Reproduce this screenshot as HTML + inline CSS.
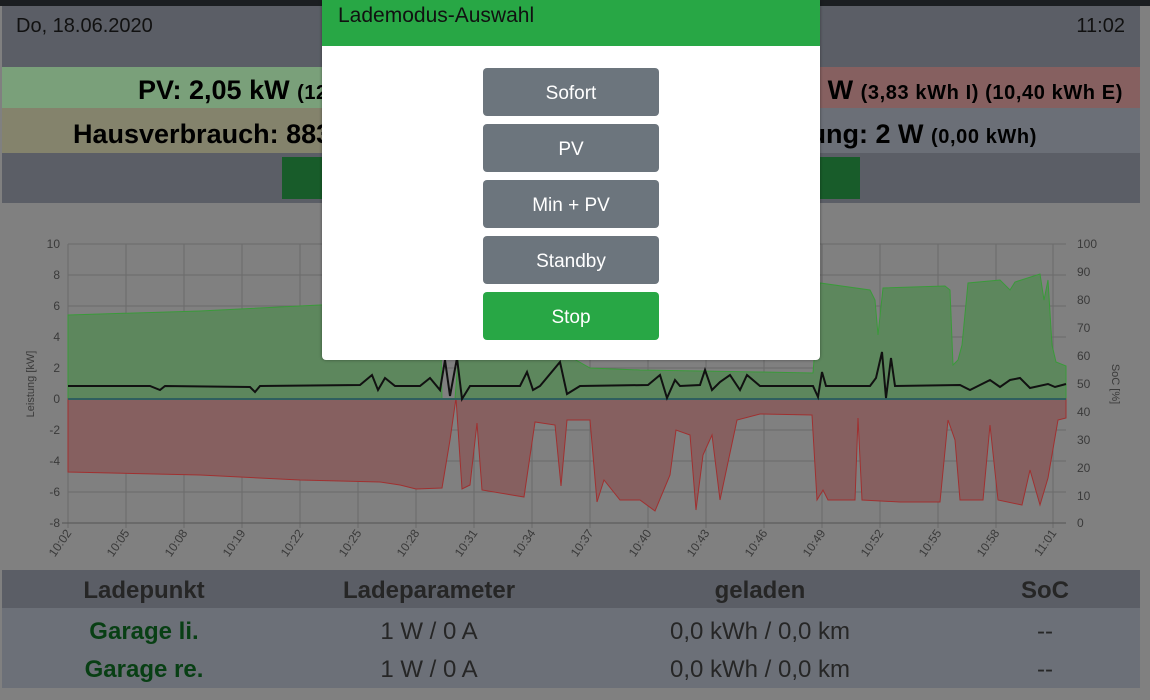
<!DOCTYPE html>
<html><head><meta charset="utf-8"><style>
*{margin:0;padding:0;box-sizing:border-box}
body{width:1150px;height:700px;overflow:hidden;background:#808080;font-family:"Liberation Sans",sans-serif;position:relative}
.a{position:absolute}
.c{position:absolute;transform:translateX(-50%);white-space:nowrap}
.btn{position:absolute;left:161px;width:176px;height:48px;border-radius:4px;background:#6c757d;color:#fff;font-size:19px;text-align:center;line-height:52px}
.s{font-size:20px;letter-spacing:.6px}
</style></head><body>
<div class="a" style="left:0;top:0;width:1150px;height:6px;background:#1b1e21"></div>
<div class="a" style="left:2px;top:6px;width:1138px;height:197px;background:#5b5e66"></div>
<div class="a" style="left:16px;top:15px;font-size:20px;color:#111">Do, 18.06.2020</div>
<div class="a" style="right:25px;top:15px;font-size:20px;color:#111">11:02</div>
<div class="a" style="left:2px;top:67px;width:569px;height:41px;background:#7aa07a"></div>
<div class="a" style="left:571px;top:67px;width:569px;height:41px;background:#866060"></div>
<div class="a" style="left:2px;top:108px;width:569px;height:45px;background:#84836c"></div>
<div class="a" style="left:571px;top:108px;width:569px;height:45px;background:#6b6f77"></div>
<div class="a" style="left:138px;top:75px;font-size:27px;font-weight:bold;color:#000;white-space:nowrap">PV: 2,05 kW <span class="s">(12,34 kWh)</span></div>
<div class="a" style="right:27px;top:75px;font-size:27px;font-weight:bold;color:#000;white-space:nowrap">EVU: 1 W <span class="s">(3,83 kWh I) (10,40 kWh E)</span></div>
<div class="a" style="left:73px;top:119px;font-size:27px;font-weight:bold;color:#000;white-space:nowrap">Hausverbrauch: 883 W</div>
<div class="a" style="right:113px;top:119px;font-size:27px;font-weight:bold;color:#000;white-space:nowrap">Ladeleistung: 2 W <span class="s">(0,00 kWh)</span></div>
<div class="a" style="left:282px;top:157px;width:578px;height:42px;background:#185c2a"></div>

<svg class="a" style="left:0;top:230px" width="1150" height="340" viewBox="0 230 1150 340">
<g stroke="#6a6a6a" stroke-width="1">
<line x1="68" y1="244" x2="1066" y2="244"/><line x1="68" y1="275" x2="1066" y2="275"/><line x1="68" y1="306" x2="1066" y2="306"/><line x1="68" y1="337" x2="1066" y2="337"/><line x1="68" y1="368" x2="1066" y2="368"/><line x1="68" y1="430" x2="1066" y2="430"/><line x1="68" y1="461" x2="1066" y2="461"/><line x1="68" y1="492" x2="1066" y2="492"/>
<line x1="68" y1="244" x2="68" y2="528"/><line x1="126" y1="244" x2="126" y2="528"/><line x1="184" y1="244" x2="184" y2="528"/><line x1="242" y1="244" x2="242" y2="528"/><line x1="300" y1="244" x2="300" y2="528"/><line x1="358" y1="244" x2="358" y2="528"/><line x1="416" y1="244" x2="416" y2="528"/><line x1="474" y1="244" x2="474" y2="528"/><line x1="532" y1="244" x2="532" y2="528"/><line x1="590" y1="244" x2="590" y2="528"/><line x1="648" y1="244" x2="648" y2="528"/><line x1="706" y1="244" x2="706" y2="528"/><line x1="764" y1="244" x2="764" y2="528"/><line x1="822" y1="244" x2="822" y2="528"/><line x1="880" y1="244" x2="880" y2="528"/><line x1="938" y1="244" x2="938" y2="528"/><line x1="996" y1="244" x2="996" y2="528"/><line x1="1053" y1="244" x2="1053" y2="528"/>
</g>
<line x1="62" y1="523" x2="1066" y2="523" stroke="#555"/>
<path d="M68 315 L200 311 L320 305 L440 303 L442 399 L455 399 L458 360 L470 300 L590 368 L640 370 L760 372 L813 373 L820 283 L870 290 L875 300 L878 335 L883 288 L945 286 L950 290 L953 365 L958 360 L962 345 L968 283 L1000 280 L1010 290 L1015 282 L1040 274 L1044 300 L1048 280 L1052 345 L1056 362 L1066 366 L1066 399 L68 399 Z" fill="#5d875d" stroke="#3a9a3a" stroke-width="1"/>
<path d="M68 399 L68 472 L200 475 L300 480 L380 482 L400 485 L416 489 L442 488 L450 440 L456 398 L462 489 L470 485 L477 423 L482 490 L524 497 L535 422 L555 425 L561 486 L567 420 L590 420 L597 502 L604 480 L620 500 L640 500 L655 511 L670 475 L676 430 L690 435 L696 510 L703 455 L712 435 L720 500 L737 420 L760 414 L812 415 L817 500 L823 490 L828 500 L840 500 L855 500 L858 418 L862 500 L900 502 L940 502 L948 420 L955 440 L960 500 L983 500 L990 425 L998 500 L1022 505 L1030 470 L1040 505 L1048 478 L1058 420 L1066 418 L1066 399 Z" fill="#866060" stroke="#a03030" stroke-width="1"/>
<line x1="68" y1="399" x2="1066" y2="399" stroke="#2f5f5f" stroke-width="2"/>
<path d="M68 386 L150 386 L160 390 L165 386 L250 387 L255 392 L260 386 L360 385 L372 375 L378 390 L385 378 L395 386 L420 386 L430 378 L440 390 L445 360 L450 396 L457 358 L462 399 L470 386 L520 386 L527 372 L533 390 L540 386 L560 362 L567 394 L580 386 L648 385 L660 375 L667 398 L675 380 L680 386 L700 385 L705 370 L712 390 L720 382 L730 375 L740 390 L747 375 L760 386 L813 386 L818 397 L822 372 L826 386 L870 386 L876 378 L882 352 L886 398 L891 358 L895 386 L960 385 L970 390 L978 386 L990 380 L1000 387 L1010 380 L1020 378 L1030 388 L1048 384 L1055 387 L1066 384" fill="none" stroke="#111" stroke-width="2"/>
<g font-size="12" fill="#3a3a3a" text-anchor="end">
<text x="60" y="248">10</text><text x="60" y="279">8</text><text x="60" y="310">6</text><text x="60" y="341">4</text><text x="60" y="372">2</text><text x="60" y="403">0</text><text x="60" y="434">-2</text><text x="60" y="465">-4</text><text x="60" y="496">-6</text><text x="60" y="527">-8</text>
</g>
<g font-size="12" fill="#3a3a3a">
<text x="1077" y="248">100</text><text x="1077" y="276">90</text><text x="1077" y="304">80</text><text x="1077" y="332">70</text><text x="1077" y="360">60</text><text x="1077" y="388">50</text><text x="1077" y="416">40</text><text x="1077" y="444">30</text><text x="1077" y="472">20</text><text x="1077" y="500">10</text><text x="1077" y="527">0</text>
</g>
<text transform="translate(34,384) rotate(-90)" font-size="11" fill="#3a3a3a" text-anchor="middle">Leistung [kW]</text>
<text transform="translate(1112,384) rotate(90)" font-size="11" fill="#3a3a3a" text-anchor="middle">SoC [%]</text>
<g font-size="12" fill="#3a3a3a" text-anchor="end">
<text transform="translate(72,533) rotate(-55)">10:02</text><text transform="translate(130,533) rotate(-55)">10:05</text><text transform="translate(188,533) rotate(-55)">10:08</text><text transform="translate(246,533) rotate(-55)">10:19</text><text transform="translate(304,533) rotate(-55)">10:22</text><text transform="translate(362,533) rotate(-55)">10:25</text><text transform="translate(420,533) rotate(-55)">10:28</text><text transform="translate(478,533) rotate(-55)">10:31</text><text transform="translate(536,533) rotate(-55)">10:34</text><text transform="translate(594,533) rotate(-55)">10:37</text><text transform="translate(652,533) rotate(-55)">10:40</text><text transform="translate(710,533) rotate(-55)">10:43</text><text transform="translate(768,533) rotate(-55)">10:46</text><text transform="translate(826,533) rotate(-55)">10:49</text><text transform="translate(884,533) rotate(-55)">10:52</text><text transform="translate(942,533) rotate(-55)">10:55</text><text transform="translate(1000,533) rotate(-55)">10:58</text><text transform="translate(1057,533) rotate(-55)">11:01</text>
</g>
</svg>

<div class="a" style="left:2px;top:570px;width:1138px;height:38px;background:#5b5e66"></div>
<div class="a" style="left:2px;top:608px;width:1138px;height:80px;background:#6c7078"></div>
<div style="font-size:24px;font-weight:bold;color:#262626">
<div class="c" style="left:144px;top:577px">Ladepunkt</div>
<div class="c" style="left:429px;top:577px">Ladeparameter</div>
<div class="c" style="left:760px;top:577px">geladen</div>
<div class="c" style="left:1045px;top:577px">SoC</div>
</div>
<div style="font-size:24px;font-weight:bold;color:#083f14">
<div class="c" style="left:144px;top:618px">Garage li.</div>
<div class="c" style="left:144px;top:656px">Garage re.</div>
</div>
<div style="font-size:24px;color:#262626">
<div class="c" style="left:429px;top:618px">1 W / 0 A</div>
<div class="c" style="left:429px;top:656px">1 W / 0 A</div>
<div class="c" style="left:760px;top:618px">0,0 kWh / 0,0 km</div>
<div class="c" style="left:760px;top:656px">0,0 kWh / 0,0 km</div>
<div class="c" style="left:1045px;top:618px">--</div>
<div class="c" style="left:1045px;top:656px">--</div>
</div>

<div class="a" style="left:322px;top:0;width:498px;height:360px;background:#fff;border-radius:0 0 4px 4px;box-shadow:0 0 3px rgba(0,0,0,.4)">
<div style="height:46px;background:#28a745;padding:4px 0 0 16px;font-size:21px;color:#111">Lademodus-Auswahl</div>
<div class="btn" style="top:68px">Sofort</div>
<div class="btn" style="top:124px">PV</div>
<div class="btn" style="top:180px">Min + PV</div>
<div class="btn" style="top:236px">Standby</div>
<div class="btn" style="top:292px;background:#28a745">Stop</div>
</div>
</body></html>
